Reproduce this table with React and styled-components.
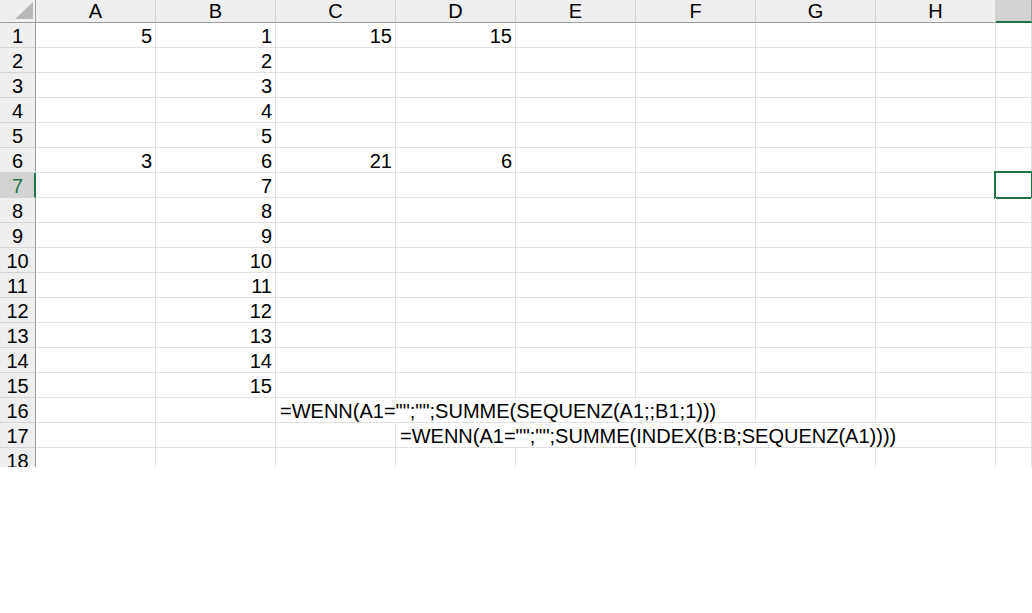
import React from 'react';
import styled, { createGlobalStyle } from 'styled-components';

const GlobalStyle = createGlobalStyle`
  html, body {
    margin: 0;
    padding: 0;
    background: #ffffff;
  }
  body {
    font-family: "Liberation Sans", Arial, sans-serif;
  }
`

const green = '#217346'

const Sheet = styled.div`
  display: grid;
  grid-template-columns: 36px repeat(8, 120px) 1fr;
  grid-template-rows: 23px repeat(18, 25px);
  width: 1032px;
  height: 467px;
  overflow: hidden;
  font-family: "Liberation Sans", Arial, sans-serif;
  font-size: 20px;
  color: #000;
`

const Corner = styled.div`
  background: #efefef;
  border-right: 1px solid #9e9e9e;
  border-bottom: 1px solid #9e9e9e;
  box-sizing: border-box;
  display: flex;
  align-items: flex-end;
  justify-content: flex-end;
  padding: 0 2px 3px 0;
`

const ColHeader = styled.div`
  box-sizing: border-box;
  display: flex;
  align-items: center;
  justify-content: center;
  background: ${p => (p.$selected ? '#d2d2d2' : '#efefef')};
  border-right: 1px solid ${p => (p.$selected ? '#9e9e9e' : '#d4d4d4')};
  border-bottom: ${p => (p.$selected ? `2px solid ${green}` : '1px solid #9e9e9e')};
  padding-top: ${p => (p.$selected ? '1px' : '0')};
  line-height: 1;
`

const RowHeader = styled.div`
  box-sizing: border-box;
  display: flex;
  align-items: center;
  justify-content: center;
  background: ${p => (p.$selected ? '#d2d2d2' : '#efefef')};
  color: ${p => (p.$selected ? green : '#000')};
  border-right: ${p => (p.$selected ? `2px solid ${green}` : '1px solid #9e9e9e')};
  border-bottom: 1px solid #d4d4d4;
  padding-left: ${p => (p.$selected ? '1px' : '0')};
  padding-top: 2px;
  line-height: 1;
`

const Cell = styled.div`
  box-sizing: border-box;
  position: relative;
  display: flex;
  align-items: center;
  justify-content: ${p => (p.$left ? 'flex-start' : 'flex-end')};
  padding: 2px 3px 0 4px;
  grid-column: span ${p => p.$span || 1};
  border-right: 1px solid #e1e1e1;
  border-bottom: 1px solid #e1e1e1;
  white-space: nowrap;
  line-height: 1;

  ${p => p.$active && `
    &::after {
      content: '';
      position: absolute;
      left: -2px;
      top: -2px;
      right: -2px;
      bottom: -2px;
      border: 2px solid ${green};
    }
  `}
`

const columns = ['A', 'B', 'C', 'D', 'E', 'F', 'G', 'H', '']

const values = {
  1: { A: 5, B: 1, C: 15, D: 15 },
  6: { A: 3, C: 21, D: 6 },
}

const spills = {
  16: { col: 2, span: 4, text: '=WENN(A1="";"";SUMME(SEQUENZ(A1;;B1;1)))' },
  17: { col: 3, span: 5, text: '=WENN(A1="";"";SUMME(INDEX(B:B;SEQUENZ(A1))))' },
}

const activeRow = 7
const activeCol = 8

const CornerTriangle = () => (
  <svg width="18" height="17" viewBox="0 0 18 17">
    <polygon points="0,17 18,17 18,0" fill="#b8b8b8" />
  </svg>
)

const SheetRow = ({ row }) => {
  const cells = []
  const spill = spills[row]
  let c = 0
  while (c < columns.length) {
    if (spill && c === spill.col) {
      cells.push(
        <Cell key={c} $left $span={spill.span}>{spill.text}</Cell>
      )
      c += spill.span
      continue
    }
    const letter = columns[c]
    let value = values[row] && values[row][letter]
    if (letter === 'B' && row <= 15) value = row
    cells.push(
      <Cell key={c} $active={row === activeRow && c === activeCol}>{value}</Cell>
    )
    c++
  }
  return (
    <>
      <RowHeader $selected={row === activeRow}>{row}</RowHeader>
      {cells}
    </>
  )
}

const App = () => {
  const rows = Array.from({ length: 18 }, (_, i) => i + 1)

  return (
    <>
      <GlobalStyle />
      <Sheet>
        <Corner><CornerTriangle /></Corner>
        {columns.map((letter, i) => (
          <ColHeader key={i} $selected={i === activeCol}>{letter}</ColHeader>
        ))}
        {rows.map(row => <SheetRow key={row} row={row} />)}
      </Sheet>
    </>
  )
}

export default App
